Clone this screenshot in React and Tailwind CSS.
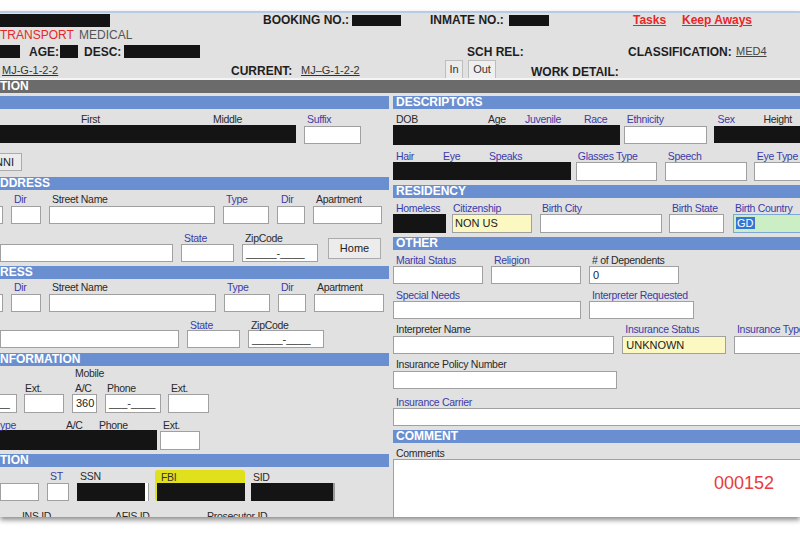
import React from "react";

function Lbl({ children, blue, className = "" }) {
  return (
    <div
      className={
        "h-[12px] leading-[12px] text-[10.5px] whitespace-nowrap tracking-[-0.3px] " +
        (blue ? "text-[#3b3ba8] " : "text-[#2a2a2a] ") +
        className
      }
    >
      {children}
    </div>
  );
}

function Box({ className = "", children }) {
  return (
    <div
      className={
        "h-[18px] border border-[#a0a0a0] text-[11px] leading-[16px] pl-[3px] text-[#222] overflow-hidden whitespace-nowrap " +
        className
      }
    >
      {children}
    </div>
  );
}

function Black({ className = "" }) {
  return <div className={"bg-[#141414] " + className} />;
}

function Head({ children, className = "" }) {
  return (
    <div
      className={
        "h-[13px] bg-[#6a8fd0] text-white font-bold text-[12px] leading-[13px] whitespace-nowrap overflow-hidden " +
        className
      }
    >
      {children}
    </div>
  );
}

function Left() {
  return (
    <div className="w-[389px] shrink-0 flex flex-col">
      <Head className="pl-[3px]"> </Head>
      {/* Name row */}
      <div className="mt-[4px] flex">
        <div className="w-[296px]">
          <div className="flex">
            <Lbl className="ml-[81px] w-[132px]">First</Lbl>
            <Lbl>Middle</Lbl>
          </div>
          <Black className="h-[18px]" />
        </div>
        <div className="ml-[8px] w-[57px]">
          <Lbl blue className="pl-[3px]">Suffix</Lbl>
          <Box className="mt-[1px] bg-white" />
        </div>
      </div>
      {/* NNI button */}
      <div className="mt-[9px] -ml-[20px] w-[42px] h-[18px] border border-[#ababab] bg-[#ececec] text-[11px] leading-[16px] text-[#222] flex justify-end pr-[7px]">
        NNI
      </div>
      <Head className="mt-[6px]">DDRESS</Head>
      {/* address row 1 */}
      <div className="mt-[3px] flex">
        <div className="-ml-[37px] w-[40px]">
          <Lbl> </Lbl>
          <Box className="mt-[1px] bg-white" />
        </div>
        <div className="ml-[8px] w-[30px]">
          <Lbl blue className="pl-[3px]">Dir</Lbl>
          <Box className="mt-[1px] bg-white" />
        </div>
        <div className="ml-[8px] w-[166px]">
          <Lbl className="pl-[3px]">Street Name</Lbl>
          <Box className="mt-[1px] bg-white" />
        </div>
        <div className="ml-[8px] w-[46px]">
          <Lbl blue className="pl-[3px]">Type</Lbl>
          <Box className="mt-[1px] bg-white" />
        </div>
        <div className="ml-[8px] w-[28px]">
          <Lbl blue className="pl-[4px]">Dir</Lbl>
          <Box className="mt-[1px] bg-white" />
        </div>
        <div className="ml-[8px] w-[69px]">
          <Lbl className="pl-[3px]">Apartment</Lbl>
          <Box className="mt-[1px] bg-white" />
        </div>
      </div>
      {/* address row 2 */}
      <div className="mt-[8px] flex">
        <div className="w-[173px]">
          <Lbl> </Lbl>
          <Box className="bg-white" />
        </div>
        <div className="ml-[8px] w-[53px]">
          <Lbl blue className="pl-[3px]">State</Lbl>
          <Box className="bg-white" />
        </div>
        <div className="ml-[8px] w-[76px]">
          <Lbl className="pl-[3px]">ZipCode</Lbl>
          <Box className="bg-white text-[#333]">_____-____</Box>
        </div>
        <div className="ml-[10px] mt-[6px] w-[53px] h-[21px] border border-[#ababab] bg-[#ececec] text-[11px] leading-[19px] text-center text-[#222]">
          Home
        </div>
      </div>
      <Head className="mt-[4px]">RESS</Head>
      {/* second address row 1 */}
      <div className="mt-[2px] flex">
        <div className="-ml-[37px] w-[40px]">
          <Lbl> </Lbl>
          <Box className="mt-[1px] bg-white" />
        </div>
        <div className="ml-[8px] w-[30px]">
          <Lbl blue className="pl-[3px]">Dir</Lbl>
          <Box className="mt-[1px] bg-white" />
        </div>
        <div className="ml-[8px] w-[167px]">
          <Lbl className="pl-[3px]">Street Name</Lbl>
          <Box className="mt-[1px] bg-white" />
        </div>
        <div className="ml-[8px] w-[46px]">
          <Lbl blue className="pl-[3px]">Type</Lbl>
          <Box className="mt-[1px] bg-white" />
        </div>
        <div className="ml-[8px] w-[28px]">
          <Lbl blue className="pl-[3px]">Dir</Lbl>
          <Box className="mt-[1px] bg-white" />
        </div>
        <div className="ml-[8px] w-[70px]">
          <Lbl className="pl-[3px]">Apartment</Lbl>
          <Box className="mt-[1px] bg-white" />
        </div>
      </div>
      {/* second address row 2 */}
      <div className="mt-[7px] flex">
        <div className="w-[179px]">
          <Lbl> </Lbl>
          <Box className="-mt-[1px] bg-white" />
        </div>
        <div className="ml-[8px] w-[53px]">
          <Lbl blue className="pl-[3px]">State</Lbl>
          <Box className="-mt-[1px] bg-white" />
        </div>
        <div className="ml-[8px] w-[76px]">
          <Lbl className="pl-[3px]">ZipCode</Lbl>
          <Box className="-mt-[1px] bg-white text-[#333]">_____-____</Box>
        </div>
      </div>
      <Head className="mt-[5px]">NFORMATION</Head>
      {/* phone */}
      <Lbl className="mt-[1px] ml-[75px]">Mobile</Lbl>
      <div className="mt-[3px] flex">
        <div className="-ml-[43px] w-[60px]">
          <Lbl> </Lbl>
          <div className="h-[19px] border border-[#a0a0a0] bg-white text-[11px] leading-[17px] text-right pr-[6px] text-[#333]">___-____</div>
        </div>
        <div className="ml-[7px] w-[40px]">
          <Lbl className="pl-[1px]">Ext.</Lbl>
          <div className="h-[19px] border border-[#a0a0a0] bg-white" />
        </div>
        <div className="ml-[8px] w-[25px]">
          <Lbl className="pl-[3px]">A/C</Lbl>
          <div className="h-[19px] border border-[#a0a0a0] bg-white text-[11px] leading-[17px] pl-[3px] text-[#222]">360</div>
        </div>
        <div className="ml-[8px] w-[56px]">
          <Lbl className="pl-[2px]">Phone</Lbl>
          <div className="h-[19px] border border-[#a0a0a0] bg-white text-[11px] leading-[17px] pl-[3px] text-[#333]">___-____</div>
        </div>
        <div className="ml-[7px] w-[41px]">
          <Lbl className="pl-[3px]">Ext.</Lbl>
          <div className="h-[19px] border border-[#a0a0a0] bg-white" />
        </div>
      </div>
      <div className="mt-[6px] flex">
        <div className="w-[157px]">
          <div className="flex">
            <Lbl blue className="w-[66px]">ype</Lbl>
            <Lbl className="w-[33px]">A/C</Lbl>
            <Lbl>Phone</Lbl>
          </div>
          <Black className="-mt-[1px] h-[20px]" />
        </div>
        <div className="ml-[3px] w-[40px]">
          <Lbl className="pl-[3px]">Ext.</Lbl>
          <div className="h-[19px] border border-[#a0a0a0] bg-white" />
        </div>
      </div>
      <Head className="mt-[4px]">TION</Head>
      {/* ids */}
      <div className="mt-[3px] flex items-start">
        <div className="w-[39px]">
          <Lbl> </Lbl>
          <Box className="mt-[1px] bg-white" />
        </div>
        <div className="ml-[8px] w-[22px]">
          <Lbl blue className="pl-[3px]">ST</Lbl>
          <Box className="mt-[1px] bg-white" />
        </div>
        <div className="ml-[8px] w-[72px]">
          <Lbl className="pl-[3px]">SSN</Lbl>
          <div className="mt-[1px] h-[18px] bg-white border-r border-[#a0a0a0]">
            <Black className="h-[18px] w-[68px]" />
          </div>
        </div>
        <div className="ml-[6px] w-[90px] bg-[#e0e01c] pl-[2px] pt-[1px] rounded-[3px]">
          <Lbl className="pl-[4px] text-[#333]">FBI</Lbl>
          <Black className="h-[18px] w-[88px]" />
        </div>
        <div className="ml-[6px] w-[84px] mt-[1px]">
          <Lbl className="pl-[2px]">SID</Lbl>
          <div className="h-[18px] border-r-[2px] border-[#9a9a9a] bg-[#141414]" />
        </div>
      </div>
      <div className="mt-[9px] flex">
        <Lbl className="ml-[22px] w-[93px]">INS ID</Lbl>
        <Lbl className="w-[92px]">AFIS ID</Lbl>
        <Lbl>Prosecutor ID</Lbl>
      </div>
    </div>
  );
}

function Right() {
  return (
    <div className="ml-[4px] w-[420px] shrink-0 flex flex-col">
      <Head className="pl-[3px]">DESCRIPTORS</Head>
      <div className="mt-[4px] flex">
        <div className="w-[230px]">
          <div className="flex">
            <Lbl className="ml-[3px] w-[92px]">DOB</Lbl>
            <Lbl className="w-[37px]">Age</Lbl>
            <Lbl blue className="w-[59px]">Juvenile</Lbl>
            <Lbl blue>Race</Lbl>
          </div>
          <Black className="h-[20px]" />
        </div>
        <div className="ml-[4px] w-[85px]">
          <Lbl blue className="pl-[3px]">Ethnicity</Lbl>
          <Box className="mt-[1px] bg-white" />
        </div>
        <div className="ml-[7px] w-[100px]">
          <div className="flex">
            <Lbl blue className="ml-[3px] w-[46px]">Sex</Lbl>
            <Lbl>Height</Lbl>
          </div>
          <Black className="mt-[1px] h-[17px]" />
        </div>
      </div>
      <div className="mt-[5px] flex">
        <div className="w-[180px]">
          <div className="flex">
            <Lbl blue className="ml-[3px] w-[47px]">Hair</Lbl>
            <Lbl blue className="w-[46px]">Eye</Lbl>
            <Lbl blue>Speaks</Lbl>
          </div>
          <Black className="h-[18px]" />
        </div>
        <div className="ml-[5px] w-[82px]">
          <Lbl blue className="pl-[2px]">Glasses Type</Lbl>
          <Box className="h-[19px] bg-white" />
        </div>
        <div className="ml-[8px] w-[83px]">
          <Lbl blue className="pl-[3px]">Speech</Lbl>
          <Box className="h-[19px] bg-white" />
        </div>
        <div className="ml-[7px] w-[60px]">
          <Lbl blue className="pl-[3px]">Eye Type</Lbl>
          <Box className="h-[19px] bg-white" />
        </div>
      </div>
      <Head className="mt-[4px] pl-[3px]">RESIDENCY</Head>
      <div className="mt-[4px] flex">
        <div className="w-[53px]">
          <Lbl blue className="h-[11px] leading-[11px] pl-[3px]">Homeless</Lbl>
          <Black className="h-[19px]" />
        </div>
        <div className="ml-[6px] w-[80px]">
          <Lbl blue className="h-[11px] leading-[11px] pl-[1px]">Citizenship</Lbl>
          <div className="h-[19px] border border-[#a0a0a0] bg-[#fbf8c2] text-[11px] leading-[17px] pl-[2px] text-[#222]">NON US</div>
        </div>
        <div className="ml-[8px] w-[122px]">
          <Lbl blue className="h-[11px] leading-[11px] pl-[2px]">Birth City</Lbl>
          <div className="h-[19px] border border-[#a0a0a0] bg-white" />
        </div>
        <div className="ml-[7px] w-[55px]">
          <Lbl blue className="h-[11px] leading-[11px] pl-[3px]">Birth State</Lbl>
          <div className="h-[19px] border border-[#a0a0a0] bg-white" />
        </div>
        <div className="ml-[9px] w-[80px]">
          <Lbl blue className="h-[11px] leading-[11px] pl-[2px]">Birth Country</Lbl>
          <div className="h-[19px] border border-[#7fa6d6] bg-[#cbeec4] text-[11px] leading-[17px] pl-[2px]">
            <span className="bg-[#3476d2] text-white px-[1px]">GD</span>
          </div>
        </div>
      </div>
      <Head className="mt-[4px] pl-[3px]">OTHER</Head>
      <div className="mt-[4px] flex">
        <div className="w-[90px]">
          <Lbl blue className="pl-[3px]">Marital Status</Lbl>
          <Box className="bg-white" />
        </div>
        <div className="ml-[8px] w-[90px]">
          <Lbl blue className="pl-[3px]">Religion</Lbl>
          <Box className="bg-white" />
        </div>
        <div className="ml-[8px] w-[90px]">
          <Lbl className="pl-[3px]">&#35; of Dependents</Lbl>
          <Box className="bg-white pl-[2px]">0</Box>
        </div>
      </div>
      <div className="mt-[5px] flex">
        <div className="w-[188px]">
          <Lbl blue className="pl-[3px]">Special Needs</Lbl>
          <Box className="bg-white" />
        </div>
        <div className="ml-[8px] w-[105px]">
          <Lbl blue className="pl-[3px]">Interpreter Requested</Lbl>
          <Box className="bg-white" />
        </div>
      </div>
      <div className="mt-[4px] flex">
        <div className="w-[224px]">
          <Lbl className="pl-[3px]">Interpreter Name</Lbl>
          <Box className="mt-[1px] bg-white" />
        </div>
        <div className="ml-[8px] w-[105px]">
          <Lbl blue className="pl-[3px]">Insurance Status</Lbl>
          <Box className="mt-[1px] bg-[#fbf8c2] pl-[2px]">UNKNOWN</Box>
        </div>
        <div className="ml-[8px] w-[80px]">
          <Lbl blue className="pl-[3px]">Insurance Type</Lbl>
          <Box className="mt-[1px] bg-white" />
        </div>
      </div>
      <div className="mt-[4px] w-[224px]">
        <Lbl className="pl-[3px]">Insurance Policy Number</Lbl>
        <Box className="mt-[1px] bg-white" />
      </div>
      <div className="mt-[7px] w-[420px]">
        <Lbl blue className="pl-[3px]">Insurance Carrier</Lbl>
        <Box className="bg-white" />
      </div>
      <Head className="mt-[4px] pl-[3px]">COMMENT</Head>
      <Lbl className="mt-[4px] pl-[3px]">Comments</Lbl>
      <div className="h-[70px] border border-[#a0a0a0] bg-white pl-[320px] pt-[12px]">
        <span className="text-[18px] leading-[20px] text-[#ea3b3b]">000152</span>
      </div>
    </div>
  );
}

export default function App() {
  return (
    <div className="w-[800px] h-[534px] bg-white overflow-hidden font-['Liberation_Sans',Arial,sans-serif]">
      <div className="mt-[11px] h-[506px] bg-[#e1e1e1] border-t-2 border-[#b9cbe4] overflow-hidden shadow-[0_3px_5px_rgba(0,0,0,0.45)]">
        {/* header row 1 */}
        <div className="h-[14px] flex items-center text-[12px] font-bold text-[#1e1e1e] whitespace-nowrap">
          <div className="w-[263px]">
            <Black className="w-[110px] h-[13px]" />
          </div>
          <div className="w-[89px]">BOOKING NO.:</div>
          <Black className="w-[49px] h-[11px]" />
          <div className="ml-[29px] w-[79px]">INMATE NO.:</div>
          <Black className="w-[40px] h-[11px]" />
          <div className="ml-[84px] w-[49px] text-[#e8262a] underline">Tasks</div>
          <div className="text-[#e8262a] underline">Keep Aways</div>
        </div>
        {/* header row 2 */}
        <div className="h-[16px] flex items-center text-[12px] whitespace-nowrap">
          <div className="w-[79px] text-[#e8262a]">TRANSPORT</div>
          <div className="text-[#555]">MEDICAL</div>
        </div>
        {/* header row 3 */}
        <div className="h-[17px] flex items-center text-[12px] font-bold text-[#1e1e1e] whitespace-nowrap">
          <Black className="w-[20px] h-[13px]" />
          <div className="ml-[9px] w-[31px]">AGE:</div>
          <Black className="w-[18px] h-[13px]" />
          <div className="ml-[6px] w-[40px]">DESC:</div>
          <Black className="w-[76px] h-[13px]" />
          <div className="ml-[267px] w-[161px]">SCH REL:</div>
          <div className="w-[108px]">CLASSIFICATION:</div>
          <div className="font-normal text-[11px] text-[#444] underline">MED4</div>
        </div>
        {/* header row 4 */}
        <div className="h-[18px] flex items-end whitespace-nowrap">
          <div className="ml-[2px] w-[229px] h-[16px] text-[11px] text-[#333] underline">MJ-G-1-2-2</div>
          <div className="w-[70px] h-[16px] text-[12px] font-bold text-[#1e1e1e]">CURRENT:</div>
          <div className="w-[144px] h-[16px] text-[11px] text-[#333] underline">MJ–G-1-2-2</div>
          <div className="w-[18px] h-[18px] border border-[#bdbdbd] border-b-0 bg-[#ececec] text-[11px] leading-[16px] text-center text-[#333]">In</div>
          <div className="ml-[5px] w-[28px] h-[18px] border border-[#bdbdbd] border-b-0 bg-[#efefef] text-[11px] leading-[16px] text-center text-[#333]">Out</div>
          <div className="ml-[35px] h-[15px] text-[12px] font-bold text-[#1e1e1e]">WORK DETAIL:</div>
        </div>
        <div className="h-[2px] bg-[#f4f4f4]" />
        <div className="h-[13px] bg-[#6b6b6b] text-white font-bold text-[12px] leading-[13px]">TION</div>
        <div className="h-[3px]" />
        <div className="flex">
          <Left />
          <Right />
        </div>
      </div>
    </div>
  );
}
